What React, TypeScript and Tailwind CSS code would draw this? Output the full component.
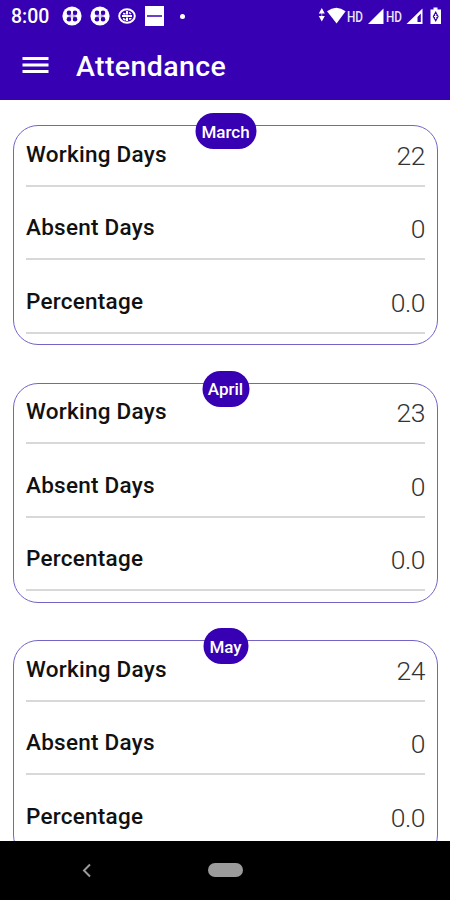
type Month = {
  name: string;
  badgeWidth: string;
  working: string;
  absent: string;
  percentage: string;
};

const months: Month[] = [
  { name: 'March', badgeWidth: 'w-[61px]', working: '22', absent: '0', percentage: '0.0' },
  { name: 'April', badgeWidth: 'w-[47px]', working: '23', absent: '0', percentage: '0.0' },
  { name: 'May', badgeWidth: 'w-[45px]', working: '24', absent: '0', percentage: '0.0' },
];

function CloverIcon() {
  return (
    <svg width="20" height="20" viewBox="0 0 20 20">
      <circle cx="10" cy="10" r="9.6" fill="#fff" />
      <g fill="#3700b3">
        <circle cx="7" cy="6.8" r="2.3" />
        <circle cx="13" cy="6.8" r="2.3" />
        <circle cx="7" cy="13.2" r="2.3" />
        <circle cx="13" cy="13.2" r="2.3" />
        <path d="M4.5 8.5h11L13 10l2.500 1.500h-11L7 10z" opacity="0.7" />
      </g>
      <path d="M10 4v12M5 10h10" stroke="#fff" strokeWidth="1.200" />
    </svg>
  );
}

function GlobeIcon() {
  return (
    <svg width="18" height="16" viewBox="0 0 18 16" fill="none" stroke="#fff">
      <ellipse cx="9" cy="8" rx="7.8" ry="6.8" strokeWidth="2" />
      <path d="M9 3v3.500M9 9.500V13M4 8h10" strokeWidth="2" />
      <path d="M5 5.500l2.500 .5M11 4.500l2 1.500M5 10.500l2.500 1.500M11 11l2.500-.5" strokeWidth="1.500" />
    </svg>
  );
}

function StatusBar() {
  return (
    <div className="flex h-8 items-center pr-[8px] pl-[11px] text-white">
      <span className="w-[51px] pt-[2px] text-[19.5px] leading-8 font-medium">8:00</span>
      <div className="flex h-8 items-center">
        <CloverIcon />
        <span className="ml-[8px]">
          <CloverIcon />
        </span>
        <span className="ml-[8px]">
          <GlobeIcon />
        </span>
        <span className="ml-[9px] flex h-[20px] w-[19px] items-center bg-white px-[2px]">
          <span className="h-[2px] w-full bg-[#3700b3]/75" />
        </span>
        <span className="ml-[16px] size-[5px] rounded-full bg-white" />
      </div>
      <svg className="ml-auto" width="124" height="20" viewBox="318 5.5 124 20" fill="#fff">
        <path d="M321.8 7.500l3 5.500h-6zM321.8 21l-3-5.500h6z" />
        <path d="M321.8 12v5" stroke="#fff" strokeWidth="1" opacity="0.6" />
        <path d="M327 10.8q9.300-7 18.600 0L336.600 23z" />
        <g fontSize="15" fontWeight="500" opacity="0.9">
          <text x="347" y="21" textLength="16" lengthAdjust="spacingAndGlyphs">
            HD
          </text>
          <text x="386" y="21" textLength="16" lengthAdjust="spacingAndGlyphs">
            HD
          </text>
        </g>
        <path d="M383.5 8v15.500H368z" />
        <path d="M422.5 8v15.500h-16zM420.8 13l-3.300 3.500V21.500h3.300z" fillRule="evenodd" />
        <path d="M433.5 7h4v2h3.500v14.500h-10.500V9h3z" />
        <path d="M435.7 10.500l3 5.500-3 5.500-3-5.500z" fill="#3700b3" />
        <path d="M435.7 13.500v5M434 16h3.400" stroke="#fff" strokeWidth="1.200" />
      </svg>
    </div>
  );
}

function AppBar() {
  return (
    <div className="flex h-[68px] items-center pl-[22px] text-white">
      <svg className="-mt-[2px]" width="27" height="18" viewBox="0 0 27 18" fill="#fff">
        <path d="M0.5 1h26v3h-26zM0.5 7.500h26v3h-26zM0.5 14h26v3h-26z" />
      </svg>
      <h1 className="mt-[2px] ml-[27px] text-[28.5px] leading-9 font-medium tracking-[0.4px]">Attendance</h1>
    </div>
  );
}

function Row({ label, value }: { label: string; value: string }) {
  return (
    <div className="flex h-[73.4px] items-end justify-between border-b-2 border-[#d8d8d8] pb-[15px]">
      <span className="pb-[2px] text-[22.5px] leading-[28px] font-medium tracking-[0.25px] text-[#111]">{label}</span>
      <span className="text-[26.5px] leading-[28px] font-light tracking-[-0.5px] text-[#333]">{value}</span>
    </div>
  );
}

function MonthCard({ month }: { month: Month }) {
  return (
    <section className="relative h-[220px] shrink-0 rounded-[25px] border border-[#7563c6] px-[12px]">
      <div className="-mt-[13px]">
        <Row label="Working Days" value={month.working} />
        <Row label="Absent Days" value={month.absent} />
        <Row label="Percentage" value={month.percentage} />
      </div>
      <span
        className={`absolute -top-[13px] left-1/2 flex h-[36px] -translate-x-1/2 items-center justify-center rounded-full bg-[#3700b3] pt-[2px] text-[17px] font-medium text-white ${month.badgeWidth}`}
      >
        {month.name}
      </span>
    </section>
  );
}

export default function App() {
  return (
    <div className="flex h-[900px] w-[450px] flex-col overflow-hidden bg-white font-['Roboto',sans-serif]">
      <header className="h-[100px] shrink-0 bg-[#3700b3]">
        <StatusBar />
        <AppBar />
      </header>
      <main className="flex min-h-0 flex-1 flex-col gap-[37.5px] overflow-hidden pt-[25.4px] pr-[12px] pl-[13px]">
        {months.map((month) => (
          <MonthCard key={month.name} month={month} />
        ))}
      </main>
      <nav className="flex h-[59.5px] shrink-0 items-center bg-black pl-[82px]">
        <svg width="10" height="15" viewBox="0 0 10 15" fill="none" stroke="#9a9a9a" strokeWidth="2">
          <path d="M8 1.500L2 7.500l6 6" />
        </svg>
        <span className="ml-[116px] h-[14px] w-[35px] rounded-full bg-[#9b9b9b]" />
      </nav>
    </div>
  );
}
